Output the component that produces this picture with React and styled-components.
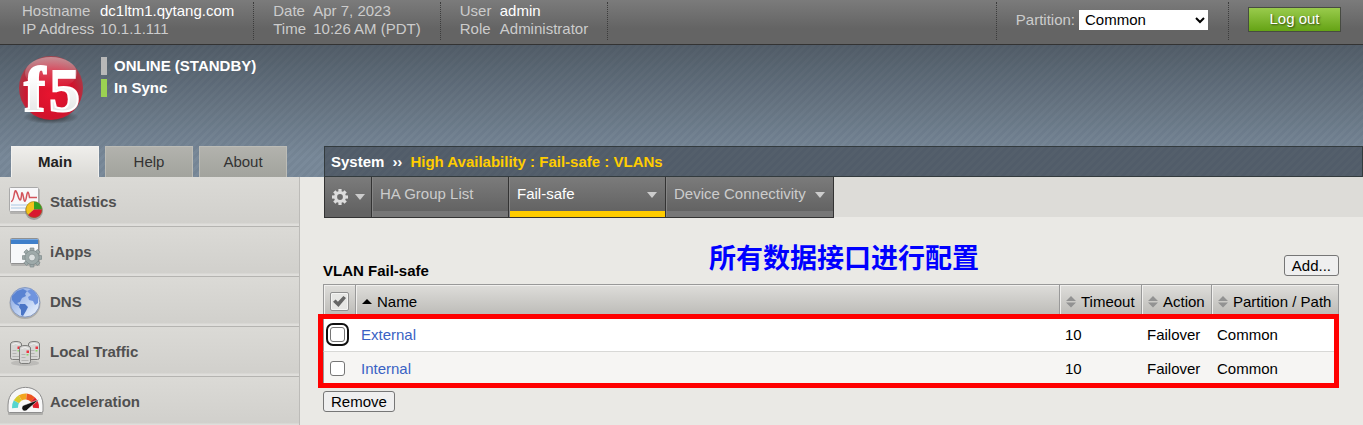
import React from "react";
import styled, { createGlobalStyle, css } from "styled-components";

const GlobalStyle = createGlobalStyle`
  *, *::before, *::after { box-sizing: border-box; }
  html { scrollbar-width: none; }
  body {
    margin: 0;
    background: #eae9e5;
    color: #000;
    font-family: "Liberation Sans", Arial, sans-serif;
    font-size: 15px;
    line-height: 18px;
  }
  button, select, input { font: inherit; margin: 0; }
  a { color: inherit; text-decoration: none; }
`;

const stripes = css`
  linear-gradient(135deg, rgba(20, 40, 60, 0.05) 25%, transparent 25% 50%, rgba(20, 40, 60, 0.05) 50% 75%, transparent 75%)
`;

const Shell = styled.div`
  display: flex;
  flex-direction: column;
  height: 100vh;
  overflow: hidden;
`;

/* Top information bar */
const TopBar = styled.header`
  display: flex;
  flex: none;
  height: 45px;
  padding: 2px 22px 4px;
  background: linear-gradient(#7b7b7b, #646464 65%);
  border-bottom: 1px solid #333;
  color: #ccc;
`;

const InfoGroup = styled.dl`
  display: grid;
  grid-template-columns: ${(p) => p.$label}px auto;
  align-content: start;
  margin: 0;
  padding-right: 19px;
  border-right: 1px dotted #3c3c3c;
  white-space: nowrap;
  & + & { padding-left: 19px; }
`;

const InfoLabel = styled.dt``;
const InfoValue = styled.dd`
  margin: 0;
  color: ${(p) => (p.$strong ? "#fff" : "#ccc")};
`;

const PartitionGroup = styled.div`
  display: flex;
  align-items: center;
  gap: 4px;
  margin-left: auto;
  padding: 0 20px 3px 19px;
  border: dotted #3c3c3c;
  border-width: 0 1px;
`;

const PartitionSelect = styled.select`
  width: 129px;
  height: 20px;
  padding: 0 2px;
  background: #fff;
  border: 0;
  border-radius: 0;
  color: #000;
`;

const LogoutButton = styled.button`
  width: 93px;
  height: 25px;
  margin: 5px 0 0 19px;
  padding: 0 0 1px;
  background: linear-gradient(#99cb4c, #65a315);
  border: 1px solid #474b42;
  color: #fff;
  text-shadow: 1px 1px 2px rgba(0, 0, 0, 0.6);
`;

/* Striped banner with logo, status, tabs and breadcrumb */
const Banner = styled.div`
  flex: none;
  background: ${stripes}, linear-gradient(#535e69, #7a8a9a 85%);
  background-size: 8px 8px, auto;
`;

const Status = styled.div`
  display: flex;
  height: 101px;
  padding: 8px 16px;
  gap: 13px;
`;

const StatusList = styled.ul`
  display: flex;
  flex-direction: column;
  gap: 4px;
  margin: 4px 0 0;
  padding: 0;
  list-style: none;
`;

const StatusItem = styled.li`
  height: 18px;
  padding-left: 7px;
  border-left: 6px solid ${(p) => p.$color};
  color: #fff;
  font-weight: bold;
`;

const NavRow = styled.div`
  display: flex;
  height: 31px;
`;

const Tabs = styled.nav`
  display: flex;
  flex: none;
  gap: 6px;
  width: 324px;
  padding-left: 11px;
`;

const Tab = styled.a`
  width: 88px;
  line-height: 30px;
  text-align: center;
  border: 1px solid ${(p) => (p.$active ? "#f2f1ee" : "#bcbcb6")};
  border-bottom: 0;
  background: ${(p) => (p.$active ? "linear-gradient(#efeeeb, #dbdad6)" : "linear-gradient(#b2b2ad, #a2a39d)")};
  color: ${(p) => (p.$active ? "#222" : "#333")};
  font-weight: ${(p) => (p.$active ? "bold" : "normal")};
`;

const Breadcrumb = styled.div`
  display: flex;
  flex: 1;
  gap: 8px;
  padding-left: 6px;
  line-height: 30px;
  border: 1px solid #333b3e;
  background: ${stripes}, #545f6b;
  background-size: 8px 8px, auto;
  color: #fff;
  font-weight: bold;
`;

const Trail = styled.span`
  color: #fc0;
`;

/* Lower part of the page */
const Body = styled.div`
  display: flex;
  flex: 1;
  min-height: 0;
`;

const Sidebar = styled.nav`
  flex: none;
  width: 300px;
  overflow: hidden;
  background: #d6d5d1;
  border-right: 1px solid #bcbbb8;
`;

const SideLink = styled.a`
  display: flex;
  align-items: center;
  height: 50px;
  background: linear-gradient(#dbdad6, #d1d0cc 46px, #dfdedb 47px);
  border-bottom: 1px solid #b5b4b1;
  color: #505050;
  font-weight: bold;
`;

const Main = styled.main`
  flex: 1;
  min-width: 0;
`;

const MenuBar = styled.nav`
  display: flex;
  height: 41px;
  margin-left: 24px;
  background: linear-gradient(#dddcd8 40px, transparent 40px);
`;

const MenuItem = styled.a`
  display: flex;
  justify-content: space-between;
  width: ${(p) => p.$width}px;
  padding: 0 8px;
  line-height: 34px;
  border: solid #333;
  border-width: 0 1px 1px 0;
  box-shadow: inset 1px 0 #858585;
  background: linear-gradient(#7b7b7b, #636363 34px, ${(p) => (p.$active ? "#fc0" : "#777")} 34px);
  color: ${(p) => (p.$active ? "#fff" : "#ccc")};
  svg { margin-top: 15px; }
`;

const GearItem = styled.button`
  display: flex;
  align-items: center;
  justify-content: space-between;
  width: 48px;
  padding: 0 6px;
  border: solid #333;
  border-width: 0 1px 1px;
  background: linear-gradient(#7b7b7b, #636363 34px);
  color: #ddd;
`;

const Content = styled.section`
  padding: 37px 24px 0 23px;
`;

const TitleRow = styled.div`
  position: relative;
  display: flex;
  justify-content: space-between;
  height: 21px;
  margin-bottom: 8px;
`;

const Title = styled.h1`
  margin: 0;
  padding-top: 7px;
  font-size: 15px;
  line-height: 18px;
`;

const Note = styled.div`
  position: absolute;
  left: 386px;
  top: -16px;
  color: #00f;
  font: bold 27px/36px "Noto Sans CJK SC", sans-serif;
  white-space: nowrap;
`;

const PlainButton = styled.button`
  height: 21px;
  padding: 0 7px;
  line-height: 19px;
  background: #efefef;
  border: 1px solid #767676;
  border-radius: 3px;
  color: #000;
`;

const TableFrame = styled.div`
  position: relative;
  margin-bottom: 5px;
`;

const Highlight = styled.div`
  position: absolute;
  inset: 30px 0 -2px -5px;
  border: 5px solid #f00;
  pointer-events: none;
`;

const Table = styled.table`
  width: 100%;
  table-layout: fixed;
  border-spacing: 0;
  border-right: 1px solid #999;
`;

const Col = styled.col`
  width: ${(p) => p.$width}px;
`;

const HeadCell = styled.th`
  height: 34px;
  padding: 0 0 0 6px;
  border: solid #999;
  border-width: 1px 0 0 1px;
  box-shadow: inset 1px 1px #f1f0ee;
  background: linear-gradient(#deddda, #b9b8b4);
  font-weight: normal;
  text-align: left;
  white-space: nowrap;
`;

const HeadLabel = styled.span`
  display: flex;
  align-items: center;
  gap: 5px;
`;

const Row = styled.tr`
  background: ${(p) => (p.$alt ? "#f6f5f3" : "#fff")};
`;

const Cell = styled.td`
  height: 34px;
  padding: 0 0 0 6px;
  border-bottom: 1px solid #d8d8d6;
  &:first-child { border-left: 1px solid #999; }
`;

const ItemLink = styled.a`
  color: #3a62c4;
`;

const RowCheck = styled.input`
  display: block;
  width: 15px;
  height: 15px;
  appearance: none;
  background: #fff;
  border: 1px solid #767676;
  border-radius: 3px;
  outline: ${(p) => (p.$ring ? "2px solid #101010" : "none")};
  outline-offset: 2px;
  &:checked { background: #767676; }
`;

const AllCheck = styled.input`
  display: block;
  width: 19px;
  height: 19px;
  appearance: none;
  background: #e6e6e4;
  border: 1px solid #8f8f8f;
  border-radius: 2px;
  box-shadow: inset 0 0 0 1px #f4f4f3;
  &:checked::before {
    content: "";
    display: block;
    width: 13px;
    height: 11px;
    margin: 3px 2px;
    background: #666;
    clip-path: polygon(0 52%, 20% 32%, 38% 52%, 80% 0, 100% 18%, 42% 100%);
  }
`;

const Caret = () => (
  <svg width="10" height="6" viewBox="0 0 10 6" aria-hidden="true">
    <path d="M0 0h10L5 6z" fill="#ccc" />
  </svg>
);

const SortIcon = () => (
  <svg width="10" height="12" viewBox="0 0 10 12" aria-hidden="true">
    <path d="M5 0l5 5H0zM5 11.500L0 6.500h10z" fill="#929292" />
  </svg>
);

const SortUp = () => (
  <svg width="10" height="6" viewBox="0 0 10 6" aria-hidden="true">
    <path d="M5 0l5 5H0z" fill="#000" />
  </svg>
);

const Gear = ({ cx, cy, r, fill, stroke, hole }) => (
  <g transform={`translate(${cx} ${cy})`} fill={fill} stroke={stroke} strokeWidth={stroke ? 0.7 : 0}>
    {[0, 45, 90, 135, 180, 225, 270, 315].map((a) => (
      <path key={a} transform={`rotate(${a})`} d={`M${-r * 0.2} ${-r * 0.65}V${-r}H${r * 0.2}V${-r * 0.65}z`} />
    ))}
    <circle r={r * 0.75} />
    <circle r={r * 0.36} fill={hole} />
  </g>
);

const Logo = () => (
  <svg width="72" height="80" viewBox="16 53 72 80" role="img" aria-label="f5">
    <defs>
      <radialGradient id="ball" cx="0.5" cy="0.6" r="0.6">
        <stop offset="0" stopColor="#e8142f" />
        <stop offset="0.6" stopColor="#d2122c" />
        <stop offset="1" stopColor="#9c4650" />
      </radialGradient>
      <linearGradient id="shine" x1="0" y1="0" x2="0" y2="1">
        <stop offset="0" stopColor="#fff" stopOpacity="0.4" />
        <stop offset="1" stopColor="#fff" stopOpacity="0" />
      </linearGradient>
      <linearGradient id="letters" x1="0" y1="0" x2="0" y2="1">
        <stop offset="0.3" stopColor="#fff" />
        <stop offset="1" stopColor="#dedede" />
      </linearGradient>
      <radialGradient id="ground">
        <stop offset="0" stopColor="#222" stopOpacity="0.9" />
        <stop offset="1" stopColor="#222" stopOpacity="0" />
      </radialGradient>
    </defs>
    <ellipse cx="51" cy="117" rx="28" ry="7" fill="url(#ground)" />
    <circle cx="51" cy="88" r="32" fill="url(#ball)" />
    <ellipse cx="51" cy="73" rx="26" ry="16" fill="url(#shine)" />
    <g fill="url(#letters)" stroke="#fff" strokeWidth="2" fontFamily="Liberation Serif" fontWeight="bold">
      <text x="24" y="111" fontSize="64">f</text>
      <text x="49" y="111" fontSize="62">5</text>
    </g>
  </svg>
);

const IconBox = ({ children }) => (
  <svg width="50" height="49" viewBox="0 0 50 49" aria-hidden="true">
    {children}
  </svg>
);

const StatisticsIcon = () => (
  <IconBox>
    <rect x="10" y="12" width="30" height="25" rx="1" fill="#777" opacity="0.35" />
    <rect x="9.500" y="10.500" width="29" height="24" rx="1" fill="#f8f8fa" stroke="#a9a9a9" />
    <path d="M11 28h27M11 31h17" stroke="#c3d8ea" strokeWidth="1.500" />
    <path d="M11 24.500q2 0 3-6t2-4.500 2 5 2 4 1.500-5 2 2.500 3-1 3 1H37" fill="none" stroke="#d3545c" strokeWidth="1.500" />
    <circle cx="34" cy="34" r="9" fill="#555" opacity="0.4" />
    <path d="M34 32.500V24.500a8 8 0 0 0-6 13.500z" fill="#f3c21c" />
    <path d="M34 32.500V24.500a8 8 0 0 1 8 8z" fill="#31a021" />
    <path d="M34 32.500h8a8 8 0 0 1-14 5.500z" fill="#d9182f" />
    <circle cx="34" cy="32.500" r="8" fill="none" stroke="#84701f" strokeWidth="0.500" />
  </IconBox>
);

const IAppsIcon = () => (
  <IconBox>
    <rect x="11" y="13" width="29" height="26" rx="1" fill="#777" opacity="0.35" />
    <rect x="10.500" y="11.500" width="28" height="25" rx="1" fill="#f7f8fa" stroke="#909090" />
    <rect x="11" y="12" width="27" height="5" fill="#3f7fca" />
    <path d="M11 12.500h27" stroke="#76a8e2" />
    <Gear cx={32} cy={30.5} r={9.5} fill="#9eaaaa" stroke="#7c8889" hole="#dbe0e0" />
  </IconBox>
);

const DnsIcon = () => (
  <IconBox>
    <defs>
      <linearGradient id="sea" x1="0" y1="0" x2="1" y2="1">
        <stop offset="0" stopColor="#7f9ddb" />
        <stop offset="0.55" stopColor="#bdd1f3" />
        <stop offset="1" stopColor="#f3f8ff" />
      </linearGradient>
    </defs>
    <circle cx="25" cy="26.500" r="15.500" fill="#666" opacity="0.35" />
    <circle cx="25" cy="25.300" r="14.800" fill="url(#sea)" stroke="#879ac0" />
    <path d="M12 19l5-5 6-2 4 2-2 3 1 2-4 2-2 4-3 1 3 2-1 1-4-2-3-4z" fill="#5a83d2" />
    <path d="M20 27l5 0 3 3-2 4-3 5-2-1 0-5-2-3z" fill="#4a75c6" />
    <path d="M27 14l4-2 4 3 3 5 0 6-3 2-2-4-4-1-1-3 3-2z" fill="#7094de" />
  </IconBox>
);

const Server = ({ x, y }) => (
  <g transform={`translate(${x} ${y})`}>
    <path d="M.5 3Q1 .5 6 .5t5.500 2.500v13.500q0 2-2 2h-7q-2 0-2-2z" fill="#d6d6d4" stroke="#7c7c7a" />
    <path d="M2.500 3.500q3-2 7 0" stroke="#f3f3f3" fill="none" />
    <path d="M2.500 9.500h4M2.500 12.500h4M2.500 15.500h7" stroke="#b4b4b2" />
    <path d="M7.500 5.500h2.500v2.500h-2.500z" fill="#ed3340" />
    <path d="M7.500 9h2v1.500h-2z" fill="#8ed573" />
  </g>
);

const LocalTrafficIcon = () => (
  <IconBox>
    <ellipse cx="25" cy="36" rx="14" ry="3" fill="#777" opacity="0.25" />
    <Server x={10} y={14} />
    <Server x={28} y={14} />
    <Server x={19} y={18} />
  </IconBox>
);

const AccelerationIcon = () => (
  <IconBox>
    <path d="M8 37V29C8 5 43 5 43 29v8q0 1-1 1H9q-1 0-1-1z" fill="#777" opacity="0.4" />
    <path d="M8 34V28C8 4.500 43 4.500 43 28v6q0 1.500-1.500 1.500h-32Q8 35.500 8 34z" fill="#f7f7f7" stroke="#8d8d8d" />
    <g fill="none" strokeWidth="6" transform="translate(25.500 30)">
      <path d="M-10.500 1A10.500 10.500 0 0 1-9.100-5.200" stroke="#57d5cf" />
      <path d="M-9.100-5.200A10.500 10.500 0 0 1-5.200-9.100" stroke="#d7c92e" />
      <path d="M-5.200-9.100A10.500 10.500 0 0 1 1-10.500" stroke="#f3a51e" />
      <path d="M1-10.500A10.500 10.500 0 0 1 7.400-7.400" stroke="#ee5620" />
      <path d="M7.400-7.400A10.500 10.500 0 0 1 10.500 1" stroke="#e01f2c" />
    </g>
    <path d="M39 22.500L27.500 32.500a3 3 0 1 1-3-4.500z" fill="#111" stroke="#f7f7f7" strokeWidth="0.500" />
  </IconBox>
);

const sideLinks = [
  ["Statistics", StatisticsIcon],
  ["iApps", IAppsIcon],
  ["DNS", DnsIcon],
  ["Local Traffic", LocalTrafficIcon],
  ["Acceleration", AccelerationIcon],
];

const vlans = [
  { name: "External", timeout: 10, action: "Failover", partition: "Common" },
  { name: "Internal", timeout: 10, action: "Failover", partition: "Common" },
];

export default function App() {
  return (
    <Shell>
      <GlobalStyle />
      <TopBar>
        <InfoGroup $label={78}>
          <InfoLabel>Hostname</InfoLabel>
          <InfoValue $strong>dc1ltm1.qytang.com</InfoValue>
          <InfoLabel>IP Address</InfoLabel>
          <InfoValue>10.1.1.111</InfoValue>
        </InfoGroup>
        <InfoGroup $label={40}>
          <InfoLabel>Date</InfoLabel>
          <InfoValue>Apr 7, 2023</InfoValue>
          <InfoLabel>Time</InfoLabel>
          <InfoValue>10:26 AM (PDT)</InfoValue>
        </InfoGroup>
        <InfoGroup $label={40}>
          <InfoLabel>User</InfoLabel>
          <InfoValue $strong>admin</InfoValue>
          <InfoLabel>Role</InfoLabel>
          <InfoValue>Administrator</InfoValue>
        </InfoGroup>
        <PartitionGroup>
          <label htmlFor="partition">Partition:</label>
          <PartitionSelect id="partition" defaultValue="Common">
            <option>Common</option>
          </PartitionSelect>
        </PartitionGroup>
        <LogoutButton type="button">Log out</LogoutButton>
      </TopBar>

      <Banner>
        <Status>
          <Logo />
          <StatusList>
            <StatusItem $color="#b8b8b8">ONLINE (STANDBY)</StatusItem>
            <StatusItem $color="#9bd152">In Sync</StatusItem>
          </StatusList>
        </Status>
        <NavRow>
          <Tabs>
            <Tab href="#main" $active>Main</Tab>
            <Tab href="#help">Help</Tab>
            <Tab href="#about">About</Tab>
          </Tabs>
          <Breadcrumb>
            <span>System</span>
            <span>››</span>
            <Trail>High Availability : Fail-safe : VLANs</Trail>
          </Breadcrumb>
        </NavRow>
      </Banner>

      <Body>
        <Sidebar>
          {sideLinks.map(([label, Icon]) => (
            <SideLink key={label} href="#section">
              <Icon />
              {label}
            </SideLink>
          ))}
        </Sidebar>
        <Main>
          <MenuBar>
            <GearItem type="button" aria-label="Options">
              <svg width="18" height="18" viewBox="0 0 18 18" aria-hidden="true">
                <Gear cx={9} cy={9} r={8} fill="#ddd" hole="#6c6c6c" />
              </svg>
              <Caret />
            </GearItem>
            <MenuItem href="#ha" $width={137}>HA Group List</MenuItem>
            <MenuItem href="#failsafe" $width={157} $active>Fail-safe<Caret /></MenuItem>
            <MenuItem href="#device" $width={168}>Device Connectivity<Caret /></MenuItem>
          </MenuBar>
          <Content>
            <TitleRow>
              <Title>VLAN Fail-safe</Title>
              <Note>所有数据接口进行配置</Note>
              <PlainButton type="button">Add...</PlainButton>
            </TitleRow>
            <TableFrame>
              <Table>
                <colgroup>
                  <Col $width={32} />
                  <col />
                  <Col $width={82} />
                  <Col $width={70} />
                  <Col $width={127} />
                </colgroup>
                <thead>
                  <tr>
                    <HeadCell><AllCheck type="checkbox" defaultChecked aria-label="Select all" /></HeadCell>
                    <HeadCell><HeadLabel><SortUp />Name</HeadLabel></HeadCell>
                    <HeadCell><HeadLabel><SortIcon />Timeout</HeadLabel></HeadCell>
                    <HeadCell><HeadLabel><SortIcon />Action</HeadLabel></HeadCell>
                    <HeadCell><HeadLabel><SortIcon />Partition / Path</HeadLabel></HeadCell>
                  </tr>
                </thead>
                <tbody>
                  {vlans.map((v, i) => (
                    <Row key={v.name} $alt={i % 2 === 1}>
                      <Cell><RowCheck type="checkbox" $ring={i === 0} aria-label={v.name} /></Cell>
                      <Cell><ItemLink href="#vlan">{v.name}</ItemLink></Cell>
                      <Cell>{v.timeout}</Cell>
                      <Cell>{v.action}</Cell>
                      <Cell>{v.partition}</Cell>
                    </Row>
                  ))}
                </tbody>
              </Table>
              <Highlight />
            </TableFrame>
            <PlainButton type="button">Remove</PlainButton>
          </Content>
        </Main>
      </Body>
    </Shell>
  );
}
